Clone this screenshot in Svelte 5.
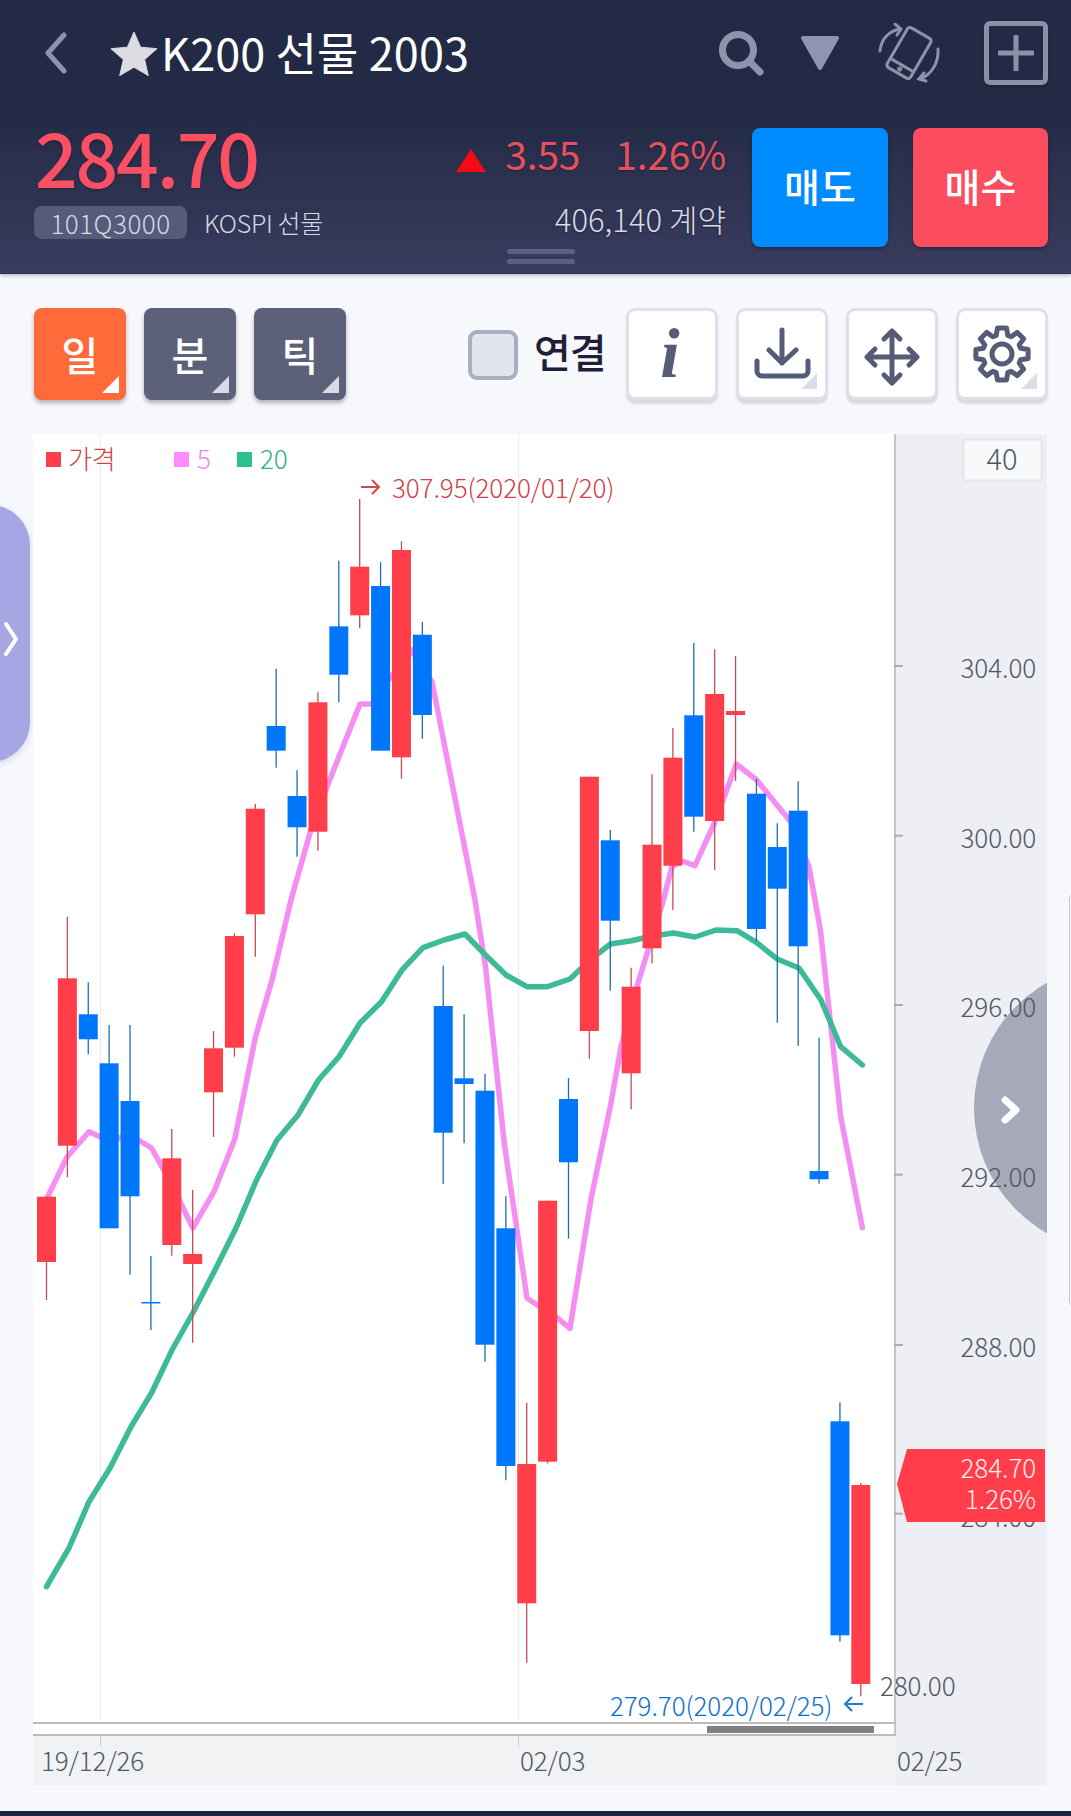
<script>
  // [open, close as body top/bottom in page px, wick top/bottom]
  const candles = [
    ['r', 1196.7, 1262, 1196.7, 1300],
    ['r', 978.3, 1145.7, 916.7, 1177.3],
    ['b', 1014.3, 1039.3, 982.3, 1054.3],
    ['b', 1063.3, 1228.3, 1025, 1228.3],
    ['b', 1101, 1196.3, 1025, 1274.7],
    ['b', 1302, 1303.5, 1256, 1330],
    ['r', 1158.3, 1245, 1129, 1255.7],
    ['r', 1254, 1264, 1190, 1342.7],
    ['r', 1048.3, 1092.3, 1031, 1137],
    ['r', 936, 1047.7, 933.3, 1056.7],
    ['r', 808.7, 914.3, 804, 956.7],
    ['b', 726, 750.7, 668.7, 767.7],
    ['b', 796, 827.3, 770.3, 856.7],
    ['r', 702.3, 831.7, 692.3, 850.7],
    ['b', 626.3, 674.7, 560.7, 702.3],
    ['r', 566.7, 615.3, 499, 628.3],
    ['b', 586, 750.7, 562.3, 750.7],
    ['r', 550, 757.3, 541.3, 778.7],
    ['b', 634.7, 715, 622, 738.7],
    ['b', 1006, 1132.7, 965.7, 1183.7],
    ['b', 1078.3, 1084, 1014.3, 1143.3],
    ['b', 1090.7, 1344.7, 1073.7, 1361.7],
    ['b', 1228.3, 1466, 1196.3, 1480.3],
    ['r', 1464, 1603.3, 1402.7, 1662.7],
    ['r', 1200.7, 1461.7, 1200.7, 1463.5],
    ['b', 1099, 1162.3, 1078, 1238.7],
    ['r', 776.7, 1031, 776.7, 1058.7],
    ['b', 840.3, 920.7, 830, 990.7],
    ['r', 986.7, 1073.3, 967.7, 1109.3],
    ['r', 844.7, 948.3, 774.3, 963.3],
    ['r', 757.7, 865.7, 728, 910],
    ['b', 715.3, 816.7, 643, 831.7],
    ['r', 694, 821, 649.3, 870],
    ['r', 711, 715, 656, 781],
    ['b', 793.7, 929, 779, 941.7],
    ['b', 847, 888.7, 823.3, 1022.7],
    ['b', 810.7, 946.3, 781.3, 1045.7],
    ['b', 1171, 1179.3, 1037.7, 1183.7],
    ['b', 1421.3, 1635.3, 1402.3, 1641.7],
    ['r', 1485, 1684, 1483, 1696.3]
  ];
  const candleX = (i) => 46.5 + 20.88 * i;

  const ma5 = '48,1196 67,1157 89,1131.7 109,1141 130,1135 151.5,1148 172,1185 192.8,1228 214,1191.7 234.8,1139 255.5,1036.7 272,980 291,900 310,833 327,786.7 360,704 372,704 391,676.7 411.5,650 432,681.7 475,900 485.5,966.7 504.5,1145 527,1298.3 557,1317.7 570,1328.3 590.8,1200 611,1103 621,1046.7 638,983 662,905 672,866.7 682,861 695,865.7 714.4,823 736.4,764 756.7,780 790.6,821.7 809,866.7 820.4,930 828,1000 840.7,1116.7 862.4,1227.7';
  const ma20 = '46.5,1586.7 69,1548 89,1501.7 110,1468 131,1426.7 151.5,1393 172,1350 192.8,1313 215,1270 236,1228 256.5,1180 277,1140 298,1115 318.5,1080 339,1056.7 360,1023 381.5,1001.7 402,970 423,947.7 444,940 465,934 485.5,955 506,975 527,986.7 547.5,986.7 570,979 590,960 610.4,944 631.4,940.7 652.4,936 673.4,933 695,937 716,930 737,930.7 756.7,942.7 777.7,959.3 799,968 821,1000 840.7,1046.7 862.4,1065';

  const axis = [
    ['304.00', 666, 669],
    ['300.00', 835.7, 839],
    ['296.00', 1005, 1008],
    ['292.00', 1174.7, 1178],
    ['288.00', 1345, 1348],
    ['284.00', 1513.7, 1518]
  ];

  // cog outline with eight teeth
  function gearPath() {
    const pts = [];
    for (let i = 0; i < 8; i++) {
      const a = (i * Math.PI) / 4;
      for (const [r, d] of [[19.5, -0.3], [26.5, -0.17], [26.5, 0.17], [19.5, 0.3]]) {
        pts.push((46 + r * Math.sin(a + d)).toFixed(1) + ' ' + (46 - r * Math.cos(a + d)).toFixed(1));
      }
    }
    return 'M' + pts.join('L') + 'Z';
  }
</script>

<div class="page">
  <header class="header">
    <div class="top-row">
      <svg class="back" width="24" height="42" viewBox="0 0 24 42"><path d="M20 3L4 21l16 18" /></svg>
      <svg class="star" width="48" height="46" viewBox="0 0 48 46">
        <path d="M24 2l6.6 15.2 16.4 1.5-12.4 10.9 3.7 16-14.3-8.4-14.3 8.4 3.7-16L1 18.700l16.400-1.500z" />
      </svg>
      <h1 class="title">K200 선물 2003</h1>
      <div class="top-icons">
        <svg class="ic search" width="46" height="46" viewBox="0 0 46 46">
          <circle cx="20" cy="20" r="15.500" />
          <path d="M32 32l10 10" />
        </svg>
        <svg class="ic-fill tri" width="42" height="36" viewBox="0 0 42 36">
          <path d="M4 3h34L21 33z" />
        </svg>
        <svg class="ic rotate" width="64" height="60" viewBox="0 0 64 60">
          <g transform="rotate(30 32 30)">
            <rect x="18.500" y="7" width="27" height="46" rx="3" />
            <path d="M18.500 44h27" />
            <circle cx="32" cy="48.500" r="1" />
          </g>
          <path d="M3 28C4 16 12 8 23 6" /><path d="M18 1l6 5-4 6" />
          <path d="M61 26C62 40 54 52 43 56" /><path d="M47 50l-5 6 7 2" />
        </svg>
        <div class="plus-box"><svg width="36" height="36" viewBox="0 0 36 36"><path d="M18 1v34M1 18h34" /></svg></div>
      </div>
    </div>

    <div class="quote-row">
      <div class="quote-left">
        <div class="price">284.70</div>
        <div class="code-row">
          <span class="code">101Q3000</span>
          <span class="market">KOSPI 선물</span>
        </div>
      </div>
      <div class="quote-mid">
        <div class="change">
          <span class="arrow-up"></span>
          <span class="chg-val">3.55</span>
          <span class="chg-pct">1.26%</span>
        </div>
        <div class="volume">406,140 계약</div>
      </div>
      <button class="trade sell">매도</button>
      <button class="trade buy">매수</button>
    </div>
    <div class="grip"></div>
  </header>

  <div class="toolbar">
    <button class="period active">일</button>
    <button class="period">분</button>
    <button class="period">틱</button>
    <span class="checkbox"></span>
    <span class="link-label">연결</span>
    <div class="tools">
      <button class="tool"><span class="info">i</span></button>
      <button class="tool corner">
        <svg width="92" height="92" viewBox="0 0 92 92">
          <path d="M43 19v33M30 39l13 13 14-13M18 50v10a5 5 0 0 0 5 5h41a5 5 0 0 0 5-5V50" />
        </svg>
      </button>
      <button class="tool">
        <svg width="92" height="92" viewBox="0 0 92 92">
          <path d="M43 20v52M18 46h50M35 28l8-8 8 8M35 64l8 8 8-8M26 38l-8 8 8 8M60 38l8 8-8 8" />
        </svg>
      </button>
      <button class="tool corner">
        <svg width="92" height="92" viewBox="0 0 92 92">
          <g transform="translate(-3 -3)"><path d={gearPath()} /><circle cx="46" cy="46" r="10" /></g>
        </svg>
      </button>
    </div>
  </div>

  <div class="chart-wrap">
    <svg class="chart" width="1014" height="1351" viewBox="33 434 1014 1351">
      <defs>
        <clipPath id="axis-clip"><rect x="895" y="434" width="152" height="1351" /></clipPath>
      </defs>
      <rect x="33" y="434" width="862" height="1301" fill="#fff" />
      <rect x="895" y="434" width="152" height="1351" fill="#edeff4" />
      <rect x="33" y="1735" width="862" height="50" fill="#f1f2f4" />

      <path class="grid" d="M100.500 434V1722M518.500 434V1722" />
      <path class="grid-tick" d="M100.500 1735v12M518.500 1735v12" />

      <polyline class="ma ma5" points={ma5} />
      <polyline class="ma ma20" points={ma20} />

      {#each candles as c, i}
        <line class={c[0] === 'r' ? 'wick-r' : 'wick-b'} x1={candleX(i)} x2={candleX(i)} y1={c[3]} y2={c[4]} />
        <rect class={c[0] === 'r' ? 'body-r' : 'body-b'} x={candleX(i) - 9.5} y={c[1]} width="19" height={c[2] - c[1]} />
      {/each}

      <rect class="sq" x="46" y="452" width="15" height="15" fill="#ff3e4a" />
      <text class="t" x="68" y="469" fill="#d2404a">가격</text>
      <rect class="sq" x="174" y="452" width="15" height="15" fill="#ff8cff" />
      <text class="t" x="197" y="469" fill="#ee80ee">5</text>
      <rect class="sq" x="237" y="452" width="15" height="15" fill="#2fbd92" />
      <text class="t" x="260" y="469" fill="#2fb08c">20</text>

      <path class="hi-arrow" d="M361 487h17M372 480l7 7-7 7" />
      <text class="t" x="392" y="498" fill="#cf3f45">307.95(2020/01/20)</text>

      <path class="lo-arrow" d="M863 1704h-17M852 1697l-7 7 7 7" />
      <text class="t" x="610" y="1716" fill="#0f6fc8">279.70(2020/02/25)</text>

      <line class="axis-line" x1="895" x2="895" y1="434" y2="1735" />
      <path class="axis-base" d="M33 1723H896M33 1735H896" />
      <rect x="707" y="1726" width="167" height="7" fill="#808080" />

      <circle cx="1118" cy="1108" r="144" fill="#a5a9b8" clip-path="url(#axis-clip)" />
      <path class="circle-chev" d="M1005 1100l11 10-11 10" />

      {#each axis as a}
        <line class="tick" x1="894" x2="903" y1={a[1]} y2={a[1]} />
        <text class="t axis-t" x="1036" y={a[2] + 9} text-anchor="end">{a[0]}</text>
      {/each}
      <text class="t axis-t" x="880" y="1696">280.00</text>

      <text class="t axis-t" x="41" y="1771">19/12/26</text>
      <text class="t axis-t" x="520" y="1771">02/03</text>
      <text class="t axis-t" x="897" y="1771">02/25</text>

      <rect x="963" y="439" width="79" height="42" rx="3" fill="#f8f9fb" stroke="#e6e8ee" stroke-width="3" />
      <text class="t axis-t count-t" x="1002" y="470" text-anchor="middle">40</text>

      <polygon points="907,1449 1045,1449 1045,1522 907,1522 897,1484" fill="#ff3e4a" />
      <text class="t tag-t" x="1036" y="1478" text-anchor="end">284.70</text>
      <text class="t tag-t" x="1036" y="1509" text-anchor="end">1.26%</text>
    </svg>
  </div>

  <div class="side-tab">
    <svg width="16" height="36" viewBox="0 0 16 36"><path d="M3 3l10 15-10 15" /></svg>
  </div>
  <div class="edge-line"></div>
  <div class="nav-bar"></div>
</div>

<style>
  :global(body) {
    margin: 0;
    background: #f7f8fc;
  }

  .page {
    position: relative;
    width: 1071px;
    height: 1816px;
    overflow: hidden;
    display: flex;
    flex-direction: column;
    background: #f7f8fc;
    font-family: "Noto Sans CJK KR", "Noto Sans", sans-serif;
  }

  button {
    font-family: inherit;
    border: none;
    padding: 0;
    margin: 0;
  }

  .header {
    height: 274px;
    flex: none;
    box-sizing: border-box;
    background: linear-gradient(#232a45 0, #232a45 110px, #393c5e 100%);
    box-shadow: 0 2px 3px rgba(30, 30, 60, 0.25);
    border-bottom: 1px solid #2c3050;
    position: relative;
    z-index: 1;
  }

  .top-row {
    height: 105px;
    display: flex;
    align-items: center;
    padding-left: 44px;
  }

  .back {
    margin-right: 42px;
  }
  .back path {
    fill: none;
    stroke: #8c93b0;
    stroke-width: 5;
    stroke-linecap: round;
    stroke-linejoin: round;
  }

  .star path {
    fill: #dcdce2;
    stroke: #dcdce2;
    stroke-width: 1;
    stroke-linejoin: round;
  }

  .title {
    margin: -2px 0 0 3px;
    font-size: 45px;
    font-weight: 400;
    color: #fff;
    letter-spacing: 0.1px;
    line-height: 1;
  }

  .top-icons {
    margin-left: auto;
    margin-right: 23px;
    display: flex;
    align-items: center;
  }

  .ic {
    fill: none;
    stroke: #8d93ad;
  }
  .search {
    stroke-width: 7;
    stroke-linecap: round;
    margin-right: 35px;
  }
  .tri {
    margin-right: 36px;
  }
  .ic-fill path {
    fill: #8f95b0;
    stroke: #8f95b0;
    stroke-width: 4;
    stroke-linejoin: round;
  }
  .rotate {
    stroke-width: 3;
    stroke-linecap: round;
    margin-right: 43px;
  }

  .plus-box {
    width: 64px;
    height: 64px;
    box-sizing: border-box;
    border: 5px solid #8a90a8;
    border-radius: 6px;
    display: flex;
    align-items: center;
    justify-content: center;
    box-shadow: 0 2px 3px rgba(0, 0, 0, 0.25);
    background: #232a45;
  }
  .plus-box path {
    stroke: #8a90a8;
    stroke-width: 5;
    stroke-linecap: round;
    fill: none;
  }

  .quote-row {
    display: flex;
    align-items: flex-start;
    padding: 23px 23px 0 34px;
  }

  .quote-left {
    width: 400px;
  }

  .price {
    font-size: 75px;
    line-height: 66px;
    font-weight: 500;
    color: #fb4f63;
    letter-spacing: -2.2px;
    margin-top: -5px;
    padding-left: 1px;
    text-shadow: 0 2px 3px rgba(0, 0, 0, 0.2);
  }

  .code-row {
    display: flex;
    align-items: center;
    margin-top: 17px;
  }
  .code {
    width: 153px;
    height: 33px;
    background: #565b7a;
    border-radius: 8px;
    font-size: 26px;
    font-weight: 300;
    line-height: 33px;
    text-align: center;
    color: #d6d8e4;
    letter-spacing: 0.5px;
  }
  .market {
    margin-left: 17px;
    font-size: 25px;
    font-weight: 300;
    line-height: 33px;
    color: #d6d8e4;
    letter-spacing: -0.3px;
  }

  .quote-mid {
    flex: 1;
    margin-right: 26px;
    display: flex;
    flex-direction: column;
    align-items: flex-end;
  }

  .change {
    display: flex;
    align-items: center;
    height: 50px;
    color: #e4525f;
    font-size: 39px;
    letter-spacing: -0.2px;
    text-shadow: 0 1px 2px rgba(0, 0, 0, 0.25);
  }
  .arrow-up {
    width: 0;
    height: 0;
    margin-top: 14px;
    border-left: 15px solid transparent;
    border-right: 15px solid transparent;
    border-bottom: 23px solid #f60a14;
    margin-right: 19px;
  }
  .chg-pct {
    margin-left: 35px;
  }

  .volume {
    margin-top: 23px;
    font-size: 31px;
    font-weight: 300;
    line-height: 36px;
    color: #d8dae6;
    letter-spacing: 0;
    text-shadow: 0 1px 2px rgba(0, 0, 0, 0.3);
  }

  .trade {
    width: 136px;
    height: 119px;
    padding-bottom: 5px;
    border-radius: 8px;
    color: #fff;
    font-size: 39px;
    font-weight: 500;
    box-shadow: 0 2px 3px rgba(0, 0, 0, 0.25);
  }
  .sell {
    background: #008cff;
  }
  .buy {
    width: 135px;
    background: #fc4d60;
    margin-left: 25px;
  }

  .grip {
    position: absolute;
    left: 507px;
    top: 249px;
    width: 68px;
    height: 5px;
    border-radius: 2px;
    background: #5a5f85;
    box-shadow: 0 10px 0 #5a5f85;
  }

  .toolbar {
    flex: none;
    height: 160px;
    box-sizing: border-box;
    padding: 34px 23px 0 34px;
    display: flex;
    align-items: flex-start;
  }

  .period {
    position: relative;
    width: 92px;
    height: 92px;
    margin-right: 18px;
    border-radius: 8px;
    background: #5c6078;
    color: #fff;
    font-size: 40px;
    font-weight: 500;
    box-shadow: 0 3px 4px rgba(40, 40, 70, 0.35);
  }
  .period::after {
    content: "";
    position: absolute;
    right: 7px;
    bottom: 7px;
    width: 0;
    height: 0;
    border-left: 17px solid transparent;
    border-bottom: 17px solid #d8dbe5;
  }
  .period.active {
    background: #ff6a3a;
  }
  .period.active::after {
    border-bottom-color: #fff;
  }

  .checkbox {
    margin: 22px 0 0 104px;
    width: 50px;
    height: 50px;
    box-sizing: border-box;
    border: 4px solid #a9afc0;
    border-radius: 9px;
    background: #e2e4ee;
  }
  .link-label {
    margin: 15px 0 0 16px;
    font-size: 40px;
    line-height: 56px;
    font-weight: 500;
    color: #1d2036;
    letter-spacing: -1px;
  }

  .tools {
    margin-left: auto;
    display: flex;
    gap: 18px;
  }
  .tool {
    position: relative;
    width: 92px;
    height: 92px;
    box-sizing: border-box;
    background: #fff;
    border: 3px solid #dee1e9;
    border-radius: 9px;
    box-shadow: 0 4px 2px #d8dbe3;
    display: flex;
    align-items: center;
    justify-content: center;
    color: #565c78;
  }
  .tool svg {
    position: absolute;
    left: 0;
    top: 0;
    fill: none;
    stroke: #565c78;
    stroke-width: 5;
    stroke-linecap: round;
    stroke-linejoin: round;
  }
  .tool.corner::after {
    content: "";
    position: absolute;
    right: 8px;
    bottom: 8px;
    width: 0;
    height: 0;
    border-left: 16px solid transparent;
    border-bottom: 16px solid #d9dde6;
  }
  .info {
    font-family: "Liberation Serif", serif;
    font-style: italic;
    font-weight: 700;
    font-size: 70px;
    line-height: 1;
    margin-right: 4px;
  }

  .chart-wrap {
    flex: none;
    margin-left: 33px;
    height: 1351px;
  }
  .chart {
    display: block;
  }

  .t {
    font-size: 26px;
    font-weight: 300;
    letter-spacing: -0.1px;
  }
  .axis-t {
    fill: #505666;
  }
  .count-t {
    font-size: 29px;
  }
  .tag-t {
    fill: #ffeef0;
  }

  .grid {
    stroke: #ececee;
    stroke-width: 1;
    fill: none;
  }
  .grid-tick {
    stroke: #c9cbd0;
    stroke-width: 1;
    fill: none;
  }

  .ma {
    fill: none;
    stroke-width: 5.500;
    stroke-linejoin: round;
    stroke-linecap: round;
  }
  .ma5 {
    stroke: #f48ef2;
  }
  .ma20 {
    stroke: #3dba97;
  }

  .wick-r {
    stroke: #c84a55;
    stroke-width: 1.300;
  }
  .wick-b {
    stroke: #1a6fb0;
    stroke-width: 1.300;
  }
  .body-r {
    fill: #ff3e4a;
  }
  .body-b {
    fill: #0077fb;
  }

  .hi-arrow,
  .lo-arrow {
    fill: none;
    stroke-width: 2;
  }
  .hi-arrow {
    stroke: #d5474c;
  }
  .lo-arrow {
    stroke: #1b7bd4;
  }

  .axis-line {
    stroke: #c5c7cc;
    stroke-width: 2;
  }
  .axis-base {
    stroke: #bbbcc0;
    stroke-width: 2;
    fill: none;
  }
  .tick {
    stroke: #a9acb4;
    stroke-width: 2;
  }
  .circle-chev {
    fill: none;
    stroke: #fff;
    stroke-width: 7;
    stroke-linecap: round;
    stroke-linejoin: round;
  }

  .side-tab {
    position: absolute;
    left: -30px;
    top: 505px;
    width: 60px;
    height: 257px;
    box-sizing: border-box;
    padding: 10px 0 0 33px;
    border-radius: 0 40px 40px 0;
    background: #a6a6e4;
    box-shadow: 0 3px 6px rgba(80, 80, 120, 0.18);
    display: flex;
    align-items: center;
  }
  .side-tab path {
    fill: none;
    stroke: #fff;
    stroke-width: 4;
    stroke-linecap: round;
    stroke-linejoin: round;
  }

  .edge-line {
    position: absolute;
    left: 1069px;
    top: 893px;
    width: 12px;
    height: 414px;
    box-sizing: border-box;
    border: 1px solid #c8c9cf;
    border-radius: 10px;
  }

  .nav-bar {
    margin-top: auto;
    height: 5px;
    background: #1c2140;
  }
</style>
